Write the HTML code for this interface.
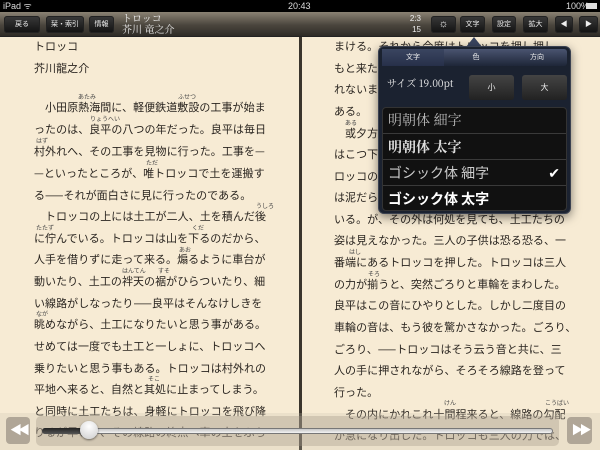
<!DOCTYPE html>
<html><head><meta charset="utf-8"><style>
*{margin:0;padding:0;box-sizing:border-box}
body{width:600px;height:450px;overflow:hidden;position:relative;background:#f6ead2;font-family:"Liberation Sans","Noto Sans CJK JP",sans-serif}
.status{position:absolute;left:0;top:0;width:600px;height:12px;background:#000;color:#ddd;font-size:9px;line-height:12px}
.bar{position:absolute;left:0;top:12px;width:600px;height:25px;background:linear-gradient(#8a8273,#4a453d 55%,#2e2b26);border-bottom:1px solid #222}
.btn{position:absolute;top:4px;height:17px;background:linear-gradient(#3a3a3a,#111);border-radius:3px;color:#eee;font-size:7px;line-height:17px;text-align:center;box-shadow:0 0 0 1px #222 inset}
.page{position:absolute;top:37px;height:413px;background:#f7ebd4}
.ln{position:absolute;font-size:11px;letter-spacing:0.05px;color:#2a2520;white-space:nowrap;line-height:16px;font-family:"Noto Sans CJK JP",sans-serif}
.rb{position:absolute;font-size:6px;color:#444;white-space:nowrap;font-family:"Noto Sans CJK JP",sans-serif}
.pop{position:absolute;left:378px;top:46px;width:193px;height:168px;background:#1b2230;border-radius:6px;box-shadow:0 3px 10px rgba(0,0,0,.5);border:1px solid #3a4150}
.row{position:absolute;left:4px;width:183px;height:26px;border-top:1px solid #3a3a3a;color:#ddd;font-family:"Noto Serif CJK SC","Noto Sans CJK JP",serif;font-size:14px;line-height:26px;padding-left:5px}
</style></head><body>
<div class="status"><span style="position:absolute;left:3px">iPad ᯤ</span><span style="position:absolute;left:288px">20:43</span><span style="position:absolute;left:566px">100%</span><span style="position:absolute;left:586px;top:3px;width:11px;height:6px;background:#ddd"></span></div>
<div class="bar">
<div class="btn" style="left:4px;width:36px">戻る</div>
<div class="btn" style="left:46px;width:38px">栞・索引</div>
<div class="btn" style="left:89px;width:25px">情報</div>
<div style="position:absolute;left:122px;top:0;color:#eee;font-size:10px;line-height:11px;font-family:'Noto Serif CJK SC',serif">トロッコ<br>芥川 竜之介</div>
<div style="position:absolute;left:404px;top:1px;color:#eee;font-size:8px;line-height:11px;text-align:right;width:17px">2:3<br>15</div>
<div class="btn" style="left:431px;width:25px;font-size:11px;color:#fff">☼</div>
<div class="btn" style="left:460px;width:25px">文字</div>
<div class="btn" style="left:492px;width:24px">設定</div>
<div class="btn" style="left:523px;width:25px">拡大</div>
<div class="btn" style="left:555px;width:18px">◀</div>
<div class="btn" style="left:579px;width:19px">▶</div>
</div>
<div class="page" style="left:0;width:299px"></div>
<div class="page" style="left:302px;width:298px"></div>
<div style="position:absolute;left:299px;top:37px;width:3px;height:413px;background:#3a342c"></div>

<div class="ln" style="left:34px;top:38px">トロッコ</div>
<div class="ln" style="left:34px;top:60px">芥川龍之介</div>
<div class="rb" style="left:78px;top:92px">あたみ</div><div class="rb" style="left:178px;top:92px">ふせつ</div>
<div class="ln" style="left:45px;top:99px">小田原熱海間に、軽便鉄道敷設の工事が始ま</div>
<div class="rb" style="left:90px;top:114px">りょうへい</div>
<div class="ln" style="left:34px;top:121px">ったのは、良平の八つの年だった。良平は毎日</div>
<div class="rb" style="left:36px;top:136px">はず</div>
<div class="ln" style="left:34px;top:143px">村外れへ、その工事を見物に行った。工事を—</div>
<div class="rb" style="left:146px;top:158px">ただ</div>
<div class="ln" style="left:34px;top:165px">—といったところが、唯トロッコで土を運搬す</div>
<div class="ln" style="left:34px;top:187px">る——それが面白さに見に行ったのである。</div>
<div class="rb" style="left:256px;top:201px">うしろ</div>
<div class="ln" style="left:45px;top:208px">トロッコの上には土工が二人、土を積んだ後</div>
<div class="rb" style="left:36px;top:223px">たたず</div><div class="rb" style="left:192px;top:223px">くだ</div>
<div class="ln" style="left:34px;top:230px">に佇んでいる。トロッコは山を下るのだから、</div>
<div class="rb" style="left:179px;top:245px">あお</div>
<div class="ln" style="left:34px;top:251px">人手を借りずに走って来る。煽るように車台が</div>
<div class="rb" style="left:122px;top:266px">はんてん</div><div class="rb" style="left:158px;top:266px">すそ</div>
<div class="ln" style="left:34px;top:273px">動いたり、土工の袢天の裾がひらついたり、細</div>
<div class="ln" style="left:34px;top:295px">い線路がしなったり——良平はそんなけしきを</div>
<div class="rb" style="left:36px;top:309px">なが</div>
<div class="ln" style="left:34px;top:316px">眺めながら、土工になりたいと思う事がある。</div>
<div class="ln" style="left:34px;top:338px">せめては一度でも土工と一しょに、トロッコへ</div>
<div class="ln" style="left:34px;top:360px">乗りたいと思う事もある。トロッコは村外れの</div>
<div class="rb" style="left:148px;top:374px">そこ</div>
<div class="ln" style="left:34px;top:381px">平地へ来ると、自然と其処に止まってしまう。</div>
<div class="ln" style="left:34px;top:403px">と同時に土工たちは、身軽にトロッコを飛び降</div>
<div class="ln" style="left:34px;top:424px">りるが早いか、その線路の終点へ車の土をぶち</div>

<div class="ln" style="left:334px;top:38px">まける。それから今度はトロッコを押し押し、</div>
<div class="ln" style="left:334px;top:60px">もと来た山の方へ登り始める。良平はその時乗</div>
<div class="ln" style="left:334px;top:81px">れないまでも、押す事さえ出来たらと思うので</div>
<div class="ln" style="left:334px;top:103px">ある。</div>
<div class="rb" style="left:345px;top:118px">ある</div>
<div class="ln" style="left:345px;top:125px">或夕方、——それは二月の初旬だった。良平</div>
<div class="ln" style="left:334px;top:146px">はこつ下の弟や、弟と同じ年の隣の子供と、ト</div>
<div class="ln" style="left:334px;top:168px">ロッコの置いてある村外れへ行った。トロッコ</div>
<div class="ln" style="left:334px;top:189px">は泥だらけになったまま、薄明るい中に並んで</div>
<div class="ln" style="left:334px;top:211px">いる。が、その外は何処を見ても、土工たちの</div>
<div class="ln" style="left:334px;top:232px">姿は見えなかった。三人の子供は恐る恐る、一</div>
<div class="rb" style="left:349px;top:247px">はし</div>
<div class="ln" style="left:334px;top:254px">番端にあるトロッコを押した。トロッコは三人</div>
<div class="rb" style="left:368px;top:269px">そろ</div>
<div class="ln" style="left:334px;top:276px">の力が揃うと、突然ごろりと車輪をまわした。</div>
<div class="ln" style="left:334px;top:297px">良平はこの音にひやりとした。しかし二度目の</div>
<div class="ln" style="left:334px;top:319px">車輪の音は、もう彼を驚かさなかった。ごろり、</div>
<div class="ln" style="left:334px;top:341px">ごろり、——トロッコはそう云う音と共に、三</div>
<div class="ln" style="left:334px;top:362px">人の手に押されながら、そろそろ線路を登って</div>
<div class="ln" style="left:334px;top:384px">行った。</div>
<div class="rb" style="left:444px;top:398px">けん</div><div class="rb" style="left:545px;top:398px">こうばい</div>
<div class="ln" style="left:345px;top:406px">その内にかれこれ十間程来ると、線路の勾配</div>
<div class="ln" style="left:334px;top:427px">が急になり出した。トロッコも三人の力では、</div>

<!-- bottom slider -->
<div style="position:absolute;left:0;top:413px;width:600px;height:37px;background:rgba(200,190,170,.25)"></div>
<div style="position:absolute;left:36px;top:416px;width:523px;height:30px;background:rgba(160,150,135,.35);border-radius:5px"></div>
<div style="position:absolute;left:6px;top:417px;width:24px;height:27px;background:rgba(170,160,145,.9);border-radius:4px;color:#fff;font-size:12px;line-height:27px;text-align:center;letter-spacing:-4px">◀◀</div>
<div style="position:absolute;left:567px;top:417px;width:25px;height:27px;background:rgba(170,160,145,.9);border-radius:4px;color:#fff;font-size:12px;line-height:27px;text-align:center;letter-spacing:-4px">▶▶</div>
<div style="position:absolute;left:42px;top:428px;width:511px;height:6px;border-radius:3px;background:linear-gradient(#bbb,#fff);box-shadow:0 0 0 1px #777 inset"></div>
<div style="position:absolute;left:42px;top:428px;width:48px;height:6px;border-radius:3px;background:linear-gradient(#222,#555)"></div>
<div style="position:absolute;left:80px;top:421px;width:18px;height:18px;border-radius:50%;background:radial-gradient(circle at 50% 30%,#fff,#ccc);box-shadow:0 1px 2px rgba(0,0,0,.5)"></div>

<!-- popover -->
<div style="position:absolute;left:466px;top:37px;width:0;height:0;border-left:8px solid transparent;border-right:8px solid transparent;border-bottom:10px solid #3a4560"></div>
<div class="pop">
<div style="position:absolute;left:3px;top:2px;width:185px;height:17px;background:linear-gradient(#4a5470,#1e2638);border-radius:3px"></div>
<div style="position:absolute;left:3px;top:2px;width:62px;height:17px;background:linear-gradient(#3a4560,#27304a);color:#eee;font-size:7px;line-height:17px;text-align:center">文字</div>
<div style="position:absolute;left:66px;top:2px;width:62px;height:17px;color:#eee;font-size:7px;line-height:17px;text-align:center">色</div>
<div style="position:absolute;left:128px;top:2px;width:60px;height:17px;color:#eee;font-size:7px;line-height:17px;text-align:center">方向</div>
<div style="position:absolute;left:8px;top:28px;color:#eee;font-size:10px;font-family:'Noto Serif CJK SC',serif">サイズ 19.00pt</div>
<div style="position:absolute;left:90px;top:28px;width:45px;height:25px;background:linear-gradient(#444,#222);border-radius:3px;color:#eee;font-size:8px;line-height:25px;text-align:center">小</div>
<div style="position:absolute;left:143px;top:28px;width:45px;height:25px;background:linear-gradient(#444,#222);border-radius:3px;color:#eee;font-size:8px;line-height:25px;text-align:center">大</div>
<div style="position:absolute;left:3px;top:60px;width:185px;height:104px;background:#111;border-radius:4px;border:1px solid #333"></div>
<div class="row" style="top:60px;border-top:none;color:#bbb">明朝体 細字</div>
<div class="row" style="top:86px;font-weight:bold">明朝体 太字</div>
<div class="row" style="top:112px;font-family:'Noto Sans CJK JP',sans-serif;color:#ccc">ゴシック体 細字<span style="position:absolute;right:6px;color:#fff">✔</span></div>
<div class="row" style="top:138px;font-family:'Noto Sans CJK JP',sans-serif;font-weight:bold;color:#fff">ゴシック体 太字</div>
</div>
</body></html>
